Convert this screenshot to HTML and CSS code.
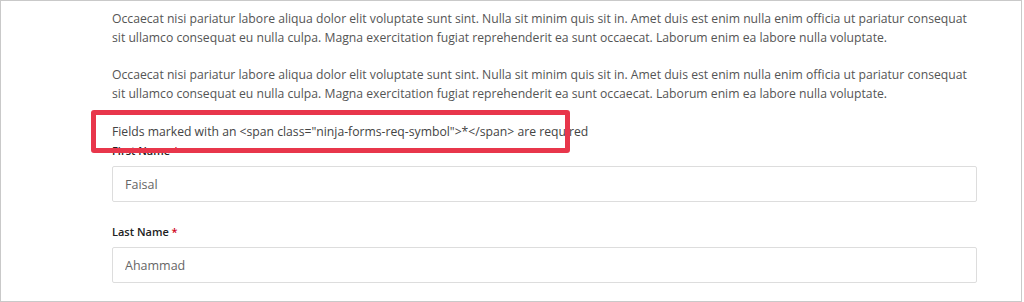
FILE: index.html
```html
<!DOCTYPE html>
<html lang="en">
<head>
    <meta charset="UTF-8">
    <meta name="viewport" content="width=device-width, initial-scale=1.0">
    <title>Ninja Forms</title>
    <link rel="stylesheet" href="styles.css">
</head>
<body>

    <div class="frame">
        <div class="content">
            <p>Occaecat nisi pariatur labore aliqua dolor elit voluptate sunt sint. Nulla sit minim quis sit in. Amet duis est enim nulla enim officia ut pariatur consequat sit ullamco consequat eu nulla culpa. Magna exercitation fugiat reprehenderit ea sunt occaecat. Laborum enim ea labore nulla voluptate.</p>
            <p>Occaecat nisi pariatur labore aliqua dolor elit voluptate sunt sint. Nulla sit minim quis sit in. Amet duis est enim nulla enim officia ut pariatur consequat sit ullamco consequat eu nulla culpa. Magna exercitation fugiat reprehenderit ea sunt occaecat. Laborum enim ea labore nulla voluptate.</p>

            <div class="req-notice">Fields marked with an &lt;span class="ninja-forms-req-symbol"&gt;*&lt;/span&gt; are required</div>

            <div class="field">
                <label for="firstname">First Name <span class="req">*</span></label>
                <input type="text" id="firstname" value="Faisal">
            </div>
            <div class="field">
                <label for="lastname">Last Name <span class="req">*</span></label>
                <input type="text" id="lastname" value="Ahammad">
            </div>
        </div>
    </div>

</body>
</html>
```

FILE: styles.css
```css
body {
    margin: 0;
    padding: 0;
    background: #fff;
    font-family: "Open Sans", Arial, sans-serif;
}
.frame {
    width: 1020px;
    height: 300px;
    border: 1px solid #c9c9c9;
    overflow: hidden;
}
.content {
    padding: 8px 40px 0 111px;
}
.content p {
    margin: 0 0 18px;
    font-size: 12.2px;
    line-height: 19px;
    color: #555;
}
.req-notice {
    position: relative;
    margin-top: 19px;
    font-size: 12.2px;
    line-height: 19px;
    color: #444;
}
.req-notice::after {
    content: "";
    position: absolute;
    left: -21px;
    top: -12px;
    width: 469px;
    height: 33px;
    border: 5px solid #e8364b;
    border-radius: 3px;
}
.field {
    margin-bottom: 20px;
}
.field label {
    display: block;
    font-size: 11px;
    line-height: 19px;
    font-weight: 600;
    color: #222;
    margin-bottom: 6px;
}
.field .req {
    color: #d0021b;
}
.field input {
    display: block;
    box-sizing: border-box;
    width: calc(100% - 4px);
    height: 36px;
    padding: 0 12px;
    border: 1px solid #ddd;
    border-radius: 2px;
    font-family: "Open Sans", Arial, sans-serif;
    font-size: 12.5px;
    color: #666;
}
```
